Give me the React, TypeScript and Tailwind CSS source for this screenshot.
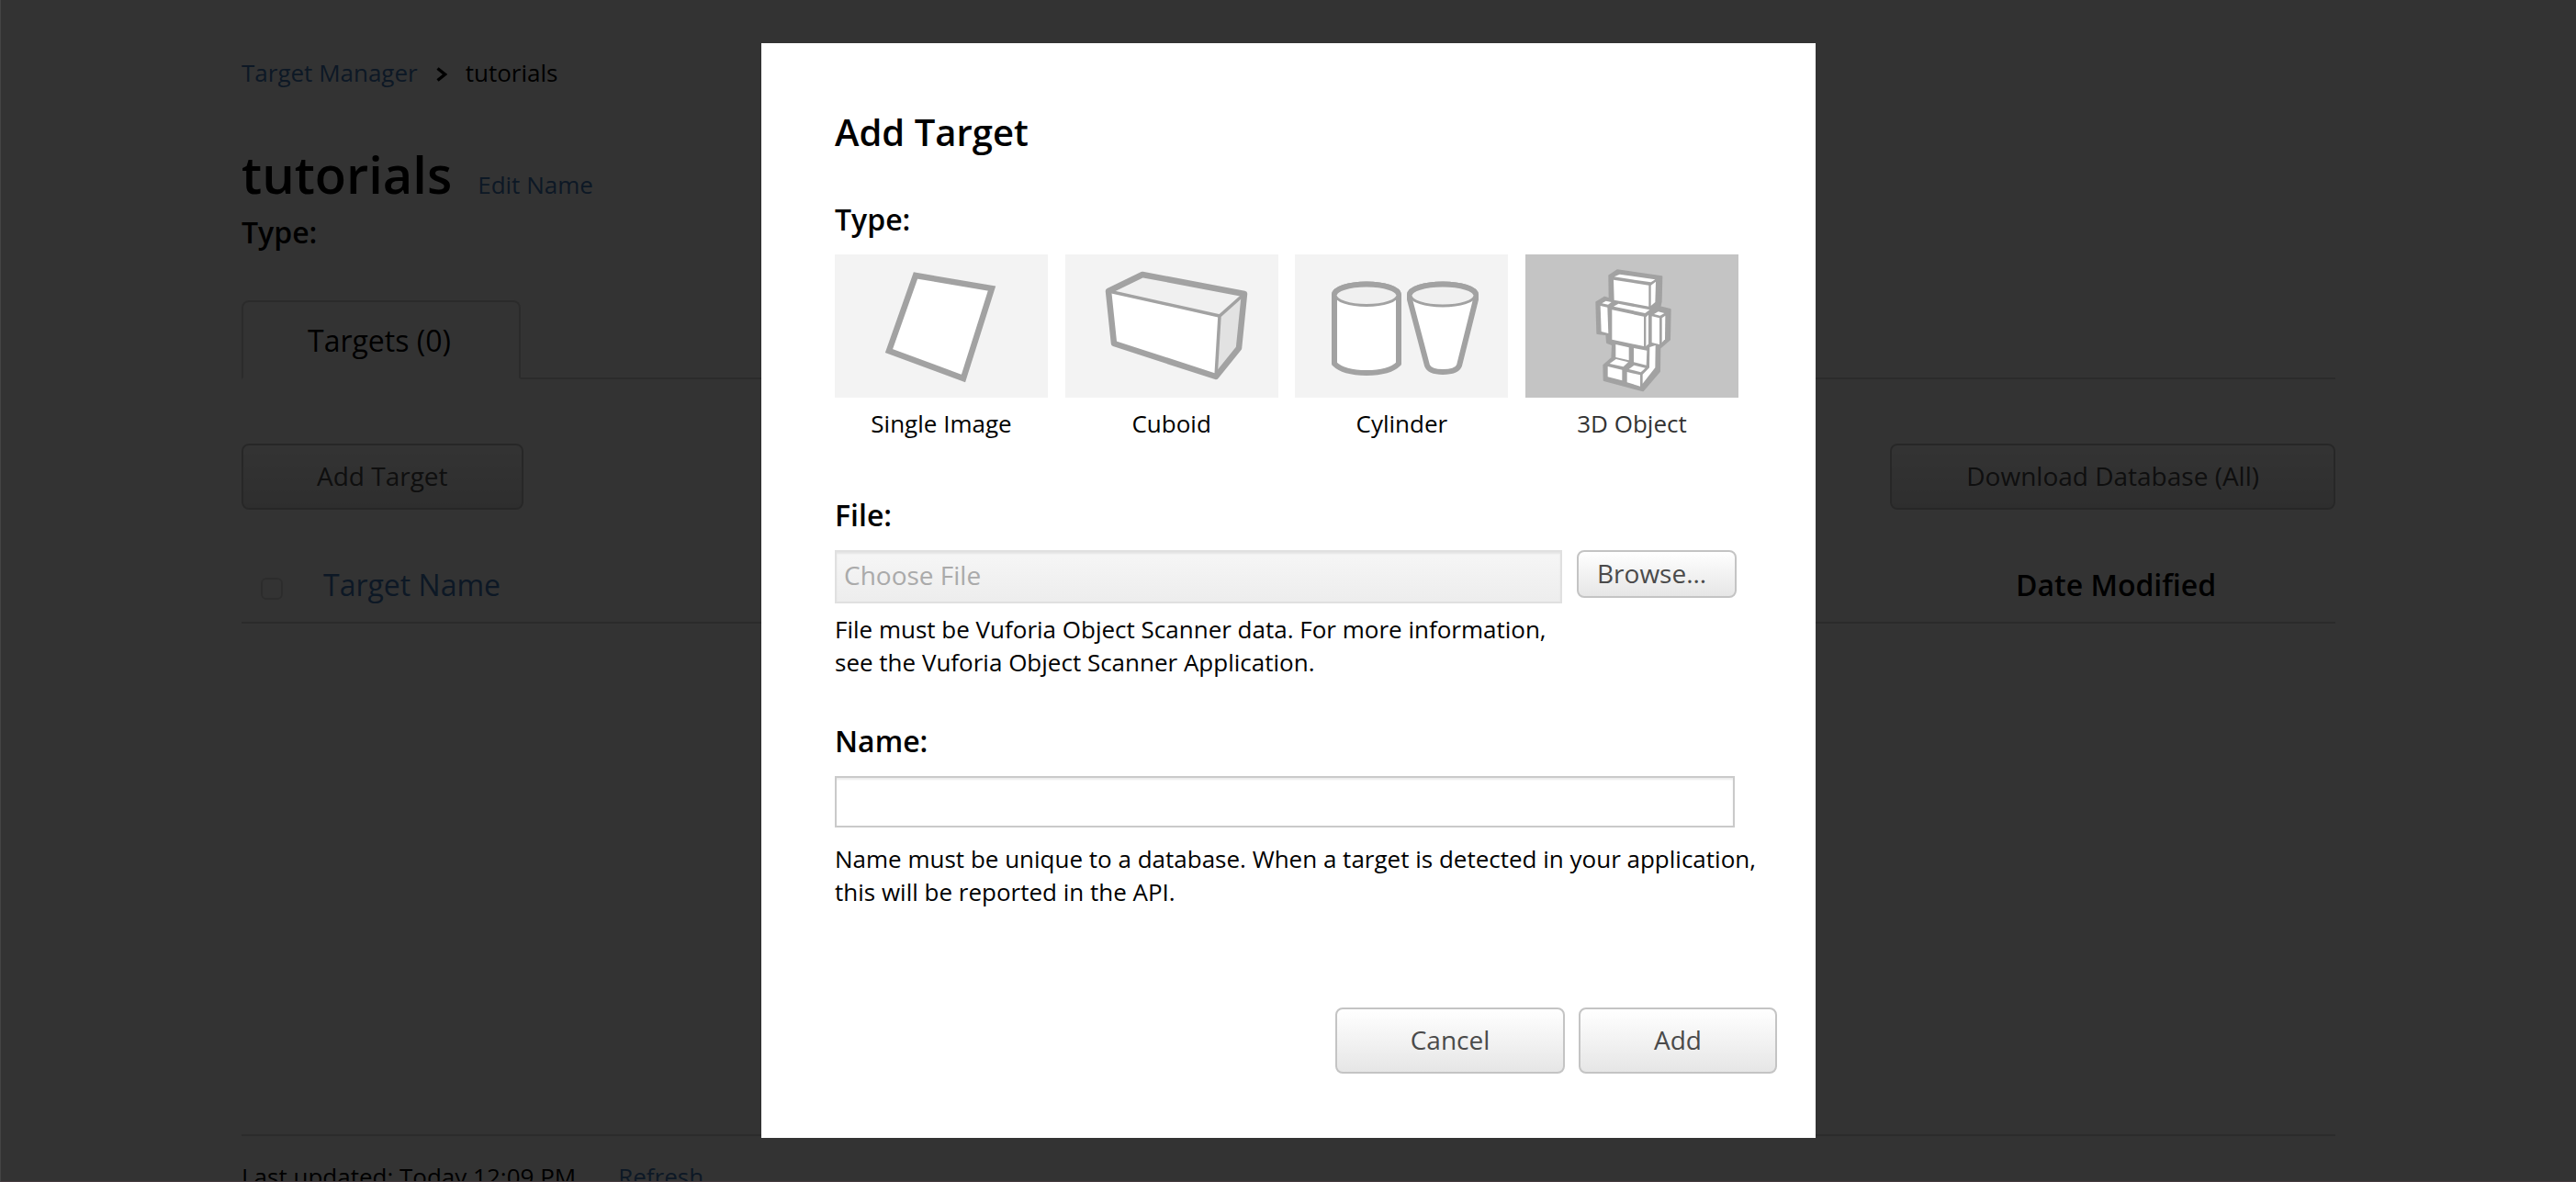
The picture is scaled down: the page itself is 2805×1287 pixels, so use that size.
import { useState } from "react";

const buttonBase =
  "rounded-lg border-2 border-[#c4c4c4] bg-linear-to-b from-white to-[#e6e6e6] text-[28px] leading-[38px] text-[#4a4a4a]";

function SingleImageIcon() {
  return (
    <svg viewBox="0 0 232 156" className="h-full w-full" aria-hidden="true">
      <path
        d="M88 23 L171 37 L140 135 L59 105 Z"
        fill="#fff"
        stroke="#a2a2a2"
        strokeWidth="6.5"
      />
    </svg>
  );
}

function CuboidIcon() {
  return (
    <svg viewBox="0 0 232 156" className="h-full w-full" aria-hidden="true">
      <path d="M47 40 L84 22 L195 43 L168 67 Z" fill="#f0f0f0" />
      <path d="M195 43 L168 67 L164 133 L189 102 Z" fill="#e2e2e2" />
      <path d="M47 40 L168 67 L164 133 L53 97 Z" fill="#fff" />
      <path
        d="M47 40 L168 67 L195 43 M168 67 L164 133"
        fill="none"
        stroke="#a2a2a2"
        strokeWidth="3.5"
      />
      <path
        d="M47 40 L84 22 L195 43 L189 102 L164 133 L53 97 Z"
        fill="none"
        stroke="#a2a2a2"
        strokeWidth="6.5"
        strokeLinejoin="round"
      />
    </svg>
  );
}

function CylinderIcon() {
  return (
    <svg viewBox="0 0 232 156" className="h-full w-full" aria-hidden="true">
      <g stroke="#a2a2a2" strokeWidth="6" strokeLinejoin="round">
        <path
          d="M43 44 A35 11.5 0 0 1 113 44 V119 C107 125 95 129 78 129 C61 129 49 125 43 119 Z"
          fill="#fff"
        />
        <path
          d="M125 44 A36 11.5 0 0 1 197 44 L197 49 L179 121 C177 126 170 128 161 128 C152 128 146 126 144 121 L125 49 Z"
          fill="#fff"
        />
      </g>
      <g fill="#f0f0f0" stroke="#a2a2a2" strokeWidth="3">
        <ellipse cx="78" cy="44" rx="34" ry="11.5" />
        <ellipse cx="161" cy="44.5" rx="35" ry="11.5" />
      </g>
      <g fill="none" stroke="#a2a2a2" strokeWidth="6">
        <path d="M43 44 A35 11.5 0 0 1 113 44" />
        <path d="M125 44 A36 11.5 0 0 1 197 44" />
      </g>
    </svg>
  );
}

function RobotIcon() {
  return (
    <svg viewBox="-177 -24 696 468" className="h-full w-full" aria-hidden="true">
      <path
        d="M97 45 L123 28 L268 49 L266 130 L262 148 L296 156 L294 254 L262 282 L261 358 L207 421 L80 387 L79 338 L106 314 L108 271 L90 264 L88 238 L58 234 L55 132 L82 116 L98 121 Z"
        fill="#a2a2a2"
        stroke="#a2a2a2"
        strokeWidth="6"
        strokeLinejoin="round"
      />
      <g fill="#fff">
        <path d="M113 49 L131 41 L247 58 L233 67 Z" />
        <path d="M111 59 L226 77 V146 L113 125 Z" />
        <path d="M233 77 L249 65 L247 132 L233 144 Z" />
        <path d="M111 146 L127 137 L229 157 L214 168 Z" />
        <path d="M106 157 L210 179 V276 L106 254 Z" />
        <path d="M217 181 L225 173 V268 L217 276 Z" />
        <path d="M73 136 L86 128 L104 132 L93 140 Z" />
        <path d="M68 144 L91 149 L94 234 L71 228 Z" />
        <path d="M243 171 L257 163 L277 168 L263 176 Z" />
        <path d="M236 178 L261 184 V270 L236 264 Z" />
        <path d="M269 184 L280 176 L279 253 L269 264 Z" />
        <path d="M118 270 L161 280 V322 L118 312 Z" />
        <path d="M177 282 L220 290 L218 338 L177 328 Z" />
        <path d="M229 279 L248 273 L247 346 L206 398 V368 L228 346 Z" />
        <path d="M98 333 L119 318 L159 328 L143 343 Z" />
        <path d="M92 342 L139 353 V388 L92 376 Z" />
        <path d="M161 351 L178 338 L215 347 L200 361 Z" />
        <path d="M155 360 L198 370 V407 L155 394 Z" />
      </g>
    </svg>
  );
}

const targetTypes = [
  { id: "single", label: "Single Image", Icon: SingleImageIcon },
  { id: "cuboid", label: "Cuboid", Icon: CuboidIcon },
  { id: "cylinder", label: "Cylinder", Icon: CylinderIcon },
  { id: "object", label: "3D Object", Icon: RobotIcon },
];

function DatabasePage() {
  return (
    <main className="mx-auto w-full max-w-[2280px] pt-[61px] text-[26px] leading-9 text-black">
      <nav className="flex items-center" aria-label="Breadcrumb">
        <a href="#manager" className="text-[#4078b8]">
          Target Manager
        </a>
        <svg
          viewBox="0 0 12 16"
          className="mx-5 mt-1 h-4 w-3"
          fill="none"
          stroke="#000"
          strokeWidth="3.4"
          aria-hidden="true"
        >
          <path d="M1.5 1.5 L9.5 8 L1.5 14.5" />
        </svg>
        <span>tutorials</span>
      </nav>

      <div className="mt-[54px] flex items-baseline gap-7">
        <h1 className="text-[56px] leading-[76px] font-semibold">tutorials</h1>
        <a href="#edit" className="text-[#4078b8]">
          Edit Name
        </a>
      </div>
      <h2 className="mt-1 text-[32px] leading-[44px] font-semibold">Type:</h2>

      <div className="mt-[52px] flex border-b-2 border-[#d4d4d4]">
        <button
          type="button"
          className="-mb-0.5 w-[304px] rounded-t-lg border-2 border-[#d4d4d4] border-b-white bg-white px-[70px] pt-5 pb-[18px] text-left text-[32px] leading-[44px] whitespace-nowrap"
        >
          Targets (0)
        </button>
      </div>

      <div className="mt-[70px] flex justify-between">
        <button type="button" className={`${buttonBase} px-20 pt-3.5 pb-4`}>
          Add Target
        </button>
        <button type="button" className={`${buttonBase} px-[81px] pt-3.5 pb-4`}>
          Download Database (All)
        </button>
      </div>

      <div className="mt-15 min-h-[622px] border-b-2 border-[#d4d4d4]">
        <table className="w-full table-fixed text-left text-[32px] leading-[44px]">
          <thead className="border-b-2 border-[#d4d4d4]">
            <tr>
              <th className="w-[89px] pb-[18px] pl-[21px] align-top">
                <input
                  type="checkbox"
                  aria-label="Select all targets"
                  className="mt-3.5 block h-6 w-6 appearance-none rounded-md border-2 border-[#dcdcdc]"
                />
              </th>
              <th className="pb-[18px] font-normal">
                <a href="#sort" className="text-[#4078b8]">
                  Target Name
                </a>
              </th>
              <th className="w-[348px] pb-[18px] font-semibold">Date Modified</th>
            </tr>
          </thead>
        </table>
      </div>

      <footer className="flex gap-[46px] pt-[26px]">
        <span>Last updated: Today 12:09 PM</span>
        <a href="#refresh" className="text-[#4078b8]">
          Refresh
        </a>
      </footer>
    </main>
  );
}

function AddTargetDialog() {
  const [type, setType] = useState("object");
  const [name, setName] = useState("");

  return (
    <form
      role="dialog"
      aria-labelledby="dialog-title"
      className="w-full max-w-[1148px] bg-white pt-[69px] pr-[42px] pb-[70px] pl-20 text-[26px] leading-9 text-black"
      onSubmit={(e) => e.preventDefault()}
    >
      <h2 id="dialog-title" className="text-[40px] leading-[56px] font-semibold">
        Add Target
      </h2>

      <fieldset className="mt-[45px] max-w-[984px]">
        <legend className="text-[32px] leading-[44px] font-semibold">Type:</legend>
        <div className="mt-4 flex justify-between">
          {targetTypes.map(({ id, label, Icon }) => (
            <label key={id} className="w-[232px] cursor-pointer text-center">
              <input
                type="radio"
                name="type"
                value={id}
                checked={type === id}
                onChange={() => setType(id)}
                className="peer sr-only"
              />
              <span className="block h-[156px] bg-[#f3f3f3] peer-checked:bg-[#c4c4c4]">
                <Icon />
              </span>
              <span className="mt-2.5 block peer-checked:text-[#333]">{label}</span>
            </label>
          ))}
        </div>
      </fieldset>

      <label
        htmlFor="file"
        className="mt-15 block text-[32px] leading-[44px] font-semibold"
      >
        File:
      </label>
      <div className="mt-4 flex max-w-[982px] items-start gap-4">
        <input
          id="file"
          type="text"
          readOnly
          placeholder="Choose File"
          className="h-[58px] min-w-0 flex-1 border-2 border-[#e0e0e0] bg-linear-to-b from-[#f6f6f6] to-[#ededed] px-2 pb-1 text-[28px] leading-[38px] shadow-[inset_0_2px_2px_#e4e4e4] placeholder:text-[#aaaaaa]"
        />
        <button
          type="button"
          className={`${buttonBase} w-[174px] pt-1 pb-1.5 pl-5 text-left`}
        >
          Browse...
        </button>
      </div>
      <p className="mt-2.5">
        File must be Vuforia Object Scanner data. For more information,
        <br />
        see the Vuforia Object Scanner Application.
      </p>

      <label
        htmlFor="name"
        className="mt-[46px] block text-[32px] leading-[44px] font-semibold"
      >
        Name:
      </label>
      <input
        id="name"
        type="text"
        value={name}
        onChange={(e) => setName(e.target.value)}
        className="mt-4 block h-14 w-full max-w-[980px] border-2 border-[#cacaca] px-2 text-[28px] shadow-[inset_0_2px_2px_#ececec]"
      />
      <p className="mt-4">
        Name must be unique to a database. When a target is detected in your application,
        <br />
        this will be reported in the API.
      </p>

      <div className="mt-27 flex justify-end gap-[15px]">
        <button type="button" className={`${buttonBase} w-[250px] pt-3.5 pb-4`}>
          Cancel
        </button>
        <button type="submit" className={`${buttonBase} w-[216px] pt-3.5 pb-4`}>
          Add
        </button>
      </div>
    </form>
  );
}

export default function App() {
  return (
    <div className='relative h-screen overflow-hidden border-l border-[#444] bg-white font-["Open_Sans",sans-serif]'>
      <DatabasePage />
      <div className="absolute inset-0 flex items-start justify-center border-b border-[#463c40] bg-black/80 pt-[47px]">
        <AddTargetDialog />
      </div>
    </div>
  );
}
